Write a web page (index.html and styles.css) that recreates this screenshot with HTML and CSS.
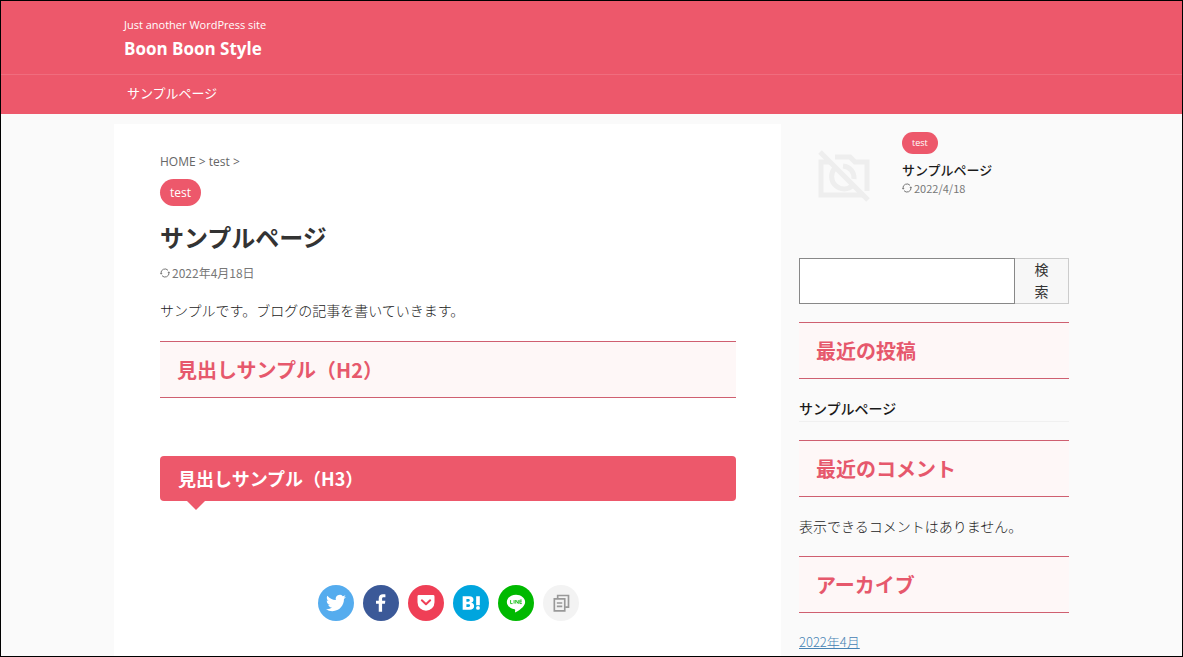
FILE: index.html
```html
<!doctype html>
<html lang="ja">
<head>
    <meta charset="UTF-8">
    <meta name="viewport" content="width=device-width, initial-scale=1">
    <title>サンプルページ</title>
    <link rel="stylesheet" href="styles.css">
</head>
<body>
    <header class="header">
      <div class="header-top">
        <div class="container">
          <p class="descr">Just another WordPress site</p>
          <p class="sitename"><a href="#">Boon Boon Style</a></p>
        </div>
      </div>
      <nav class="nav">
        <div class="container">
          <a href="#">サンプルページ</a>
        </div>
      </nav>
    </header>
    <div class="content">
      <main class="main">
        <div class="breadcrumb"><a href="#">HOME</a> &gt; <a href="#">test</a> &gt;</div>
        <a class="cat" href="#">test</a>
        <h1 class="entry-title">サンプルページ</h1>
        <p class="date">
          <svg class="refresh" viewBox="0 0 12 12"><path d="M1.2 6.500A4.800 4.800 0 0 1 9.600 2.800M10.800 5.500A4.800 4.800 0 0 1 2.400 9.200" fill="none" stroke="currentColor" stroke-width="1.200"/><path d="M0 6h3L1.300 8zM12 6H9l1.700-2z" fill="currentColor"/></svg>
          2022年4月18日
        </p>
        <p class="text">サンプルです。ブログの記事を書いていきます。</p>
        <h2 class="heading">見出しサンプル（H2）</h2>
        <h3 class="balloon">見出しサンプル（H3）</h3>
        <ul class="sns">
          <li><a class="twitter" href="#" aria-label="Twitter"><svg viewBox="0 0 24 24"><path fill="#fff" d="M23.95 4.57a10 10 0 0 1-2.82.77 4.96 4.96 0 0 0 2.16-2.72c-.95.55-2 .95-3.13 1.18a4.92 4.92 0 0 0-8.38 4.48C7.69 8.1 4.07 6.13 1.64 3.16a4.82 4.82 0 0 0-.67 2.48c0 1.71.87 3.21 2.19 4.1a4.9 4.9 0 0 1-2.23-.62v.06a4.92 4.92 0 0 0 3.95 4.83 5 5 0 0 1-2.21.08 4.94 4.94 0 0 0 4.6 3.42A9.87 9.87 0 0 1 0 19.54a14 14 0 0 0 7.55 2.21c9.05 0 14-7.5 14-13.98l-.02-.63a9.94 9.94 0 0 0 2.42-2.57z"/></svg></a></li>
          <li><a class="facebook" href="#" aria-label="Facebook"><svg viewBox="0 0 24 24"><path fill="#fff" d="M9.3 22.5V13H6V9.2h3.3V6.6c0-3.3 2-5.1 5-5.1 1.4 0 2.6.1 3 .2v3.4h-2c-1.7 0-2 .8-2 1.9v2.2h3.9l-.5 3.8h-3.4v9.500z"/></svg></a></li>
          <li><a class="pocket" href="#" aria-label="Pocket"><svg viewBox="0 0 24 24"><path fill="#fff" d="M3.5 2.5h17A1.7 1.7 0 0 1 22.2 4.2V11a10.2 10.2 0 0 1-20.4 0V4.2a1.7 1.7 0 0 1 1.7-1.7z"/><path d="M7 8.8l5 4.7 5-4.7" fill="none" stroke="#ef3f56" stroke-width="2.4" stroke-linecap="round" stroke-linejoin="round"/></svg></a></li>
          <li><a class="hatena" href="#" aria-label="はてなブックマーク"><svg viewBox="0 0 24 24"><path fill="#fff" fill-rule="evenodd" d="M2 4h8c3.400 0 5 1.500 5 4 0 1.900-1 3.200-2.900 3.600 2.300.3 3.600 1.800 3.600 4 0 3-2 4.400-5.400 4.400H2zm4.500 3.200v3.200H8.500c1.500 0 2-.5 2-1.600s-.7-1.600-2-1.600zm0 6.200v3.400h2.300c1.500 0 2.100-.5 2.100-1.700 0-1.200-.7-1.700-2.100-1.700zM18.200 4h4.400v10.600h-4.400z"/><circle cx="20.400" cy="17.900" r="2.300" fill="#fff"/></svg></a></li>
          <li><a class="line" href="#" aria-label="LINE"><svg viewBox="0 0 24 24"><path fill="#fff" d="M12 2C5.9 2 1 5.9 1 10.800c0 4.400 3.900 8 9.200 8.700 1 .3.9.9.6 3.300 0 .4.3.6.7.4 2.500-1.300 11.500-6.500 11.500-12.400C23 5.900 18.100 2 12 2z"/><path d="M5.500 8.500v4.200h2.400M9.700 8.500v4.200M11.700 12.700V8.500l3 4.200V8.500M19 8.500h-2.400v4.200H19M16.600 10.600H19" fill="none" stroke="#00b900"/></svg></a></li>
          <li><a class="copy" href="#" aria-label="コピー"><svg viewBox="0 0 24 24"><path d="M8 6V3h13v14h-4" fill="none" stroke="#999" stroke-width="2"/><path d="M4 7h12.500v14.500H4zM7 12h6.500M7 16h6.500" fill="none" stroke="#999" stroke-width="2"/></svg></a></li>
        </ul>
      </main>
      <aside class="side">
        <div class="recent">
          <a class="thumb" href="#" aria-label="サンプルページ"><svg viewBox="0 0 90 90"><g fill="none" stroke="#eee" stroke-width="5"><path d="M31 38H22v33h43M36 33h15l5 5h12v29"/><path d="M36 44a12 12 0 1 0 18 17M44 42a12 12 0 0 1 11 13"/><path d="M21 28l48 48"/></g></svg></a>
          <div>
            <a class="cat cat-small" href="#">test</a>
            <p class="recent-title"><a href="#">サンプルページ</a></p>
            <p class="date date-small">
              <svg class="refresh" viewBox="0 0 12 12"><path d="M1.2 6.500A4.800 4.800 0 0 1 9.600 2.800M10.800 5.500A4.800 4.800 0 0 1 2.400 9.200" fill="none" stroke="currentColor" stroke-width="1.200"/><path d="M0 6h3L1.300 8zM12 6H9l1.700-2z" fill="currentColor"/></svg>
              2022/4/18
            </p>
          </div>
        </div>
        <form class="search">
          <input type="text" aria-label="検索">
          <button type="submit">検索</button>
        </form>
        <h2 class="heading">最近の投稿</h2>
        <ul class="posts">
          <li><a href="#">サンプルページ</a></li>
        </ul>
        <h2 class="heading">最近のコメント</h2>
        <p class="no-comments">表示できるコメントはありません。</p>
        <h2 class="heading">アーカイブ</h2>
        <a class="archive" href="#">2022年4月</a>
      </aside>
    </div>
</body>
</html>
```

FILE: styles.css
```css
* {
  box-sizing: border-box;
  margin: 0;
  padding: 0;
}
body {
  display: flex;
  flex-direction: column;
  min-height: 100vh;
  border: 1px solid #000;
  background-color: #fafafa;
  color: #1a1a1a;
  font-family: "Open Sans", "Noto Sans CJK JP", sans-serif;
  font-size: 14px;
  line-height: 20px;
}
a {
  color: inherit;
  text-decoration: none;
}
ul {
  list-style: none;
}
.container,
.content {
  width: 100%;
  max-width: 955px;
  margin: 0 auto;
}

/* header */
.header {
  background-color: #ed586b;
  color: #fff;
}
.header-top {
  padding: 14px 0 11px;
  border-bottom: 1px solid #f06d7e;
}
.header-top .container {
  padding: 0 10px;
}
.descr {
  font-size: 11px;
}
.sitename {
  font-size: 17px;
  font-weight: bold;
  line-height: 28px;
}
.nav .container {
  padding: 0 13px 2px;
  font-size: 13px;
  line-height: 37px;
}

/* content */
.content {
  display: flex;
  flex: 1;
  gap: 18px;
  padding-top: 10px;
}
.main {
  flex: 1;
  padding: 28px 45px 0 46px;
  background-color: #fff;
}
.breadcrumb {
  color: #666;
  font-size: 12px;
}
.cat {
  display: inline-block;
  margin-top: 7px;
  padding: 0 10px;
  border-radius: 14px;
  background-color: #ed586b;
  color: #fff;
  font-size: 12px;
  line-height: 27px;
  vertical-align: top;
}
.entry-title {
  margin-top: 15px;
  color: #333;
  font-size: 24px;
  line-height: 34px;
}
.date {
  display: flex;
  align-items: center;
  gap: 2px;
  margin-top: 8px;
  color: #777;
  font-family: "Noto Sans CJK JP", sans-serif;
  font-size: 12px;
}
.refresh {
  width: 10px;
  height: 10px;
}
.text {
  margin: 18px 0 20px;
  font-weight: 300;
}
.heading {
  padding: 14px 17px;
  border-top: 1px solid #cf5f70;
  border-bottom: 1px solid #cf5f70;
  background-color: #fef7f7;
  color: #e6586c;
  font-family: "Noto Sans CJK JP", sans-serif;
  font-size: 20px;
  line-height: 27px;
}
.balloon {
  position: relative;
  margin-top: 58px;
  padding: 10px 18px;
  border-radius: 4px;
  background-color: #ed586b;
  color: #fff;
  font-family: "Noto Sans CJK JP", sans-serif;
  font-size: 18px;
  line-height: 25px;
}
.balloon::after {
  content: "";
  position: absolute;
  top: 100%;
  left: 27px;
  border: 9px solid transparent;
  border-top-color: #ed586b;
  border-bottom: 0;
}

/* share buttons */
.sns {
  display: flex;
  justify-content: center;
  gap: 9px;
  margin-top: 84px;
}
.sns a {
  display: flex;
  align-items: center;
  justify-content: center;
  width: 36px;
  height: 36px;
  border-radius: 50%;
}
.sns svg {
  width: 20px;
  height: 20px;
}
.twitter {
  background-color: #55acee;
}
.facebook {
  background-color: #3b5998;
}
.pocket {
  background-color: #ef3f56;
}
.hatena {
  background-color: #00a5de;
}
.line {
  background-color: #00b900;
}
.copy {
  background-color: #f3f3f3;
}

/* sidebar */
.side {
  width: 270px;
}
.recent {
  display: flex;
  gap: 13px;
  height: 134px;
}
.thumb svg {
  display: block;
  width: 90px;
  height: 90px;
}
.cat-small {
  margin-top: 8px;
  font-size: 9px;
  line-height: 22px;
}
.recent-title {
  margin-top: 6px;
  font-size: 13px;
  font-weight: 500;
}
.date-small {
  margin-top: 0;
  font-size: 11px;
  line-height: 16px;
}
.search {
  display: flex;
  height: 46px;
  margin-bottom: 18px;
}
.search input {
  flex: 1;
  min-width: 0;
  padding: 0 10px;
  border: 1px solid #888;
  background-color: #fff;
}
.search button {
  width: 54px;
  padding: 0 19px;
  border: 1px solid #ccc;
  border-left: 0;
  background-color: #f7f7f7;
  color: #333;
  font-family: inherit;
  font-size: 14px;
  line-height: 22px;
}
.posts {
  margin: 20px 0 18px;
}
.posts li {
  padding-bottom: 2px;
  border-bottom: 1px solid #f0f0f0;
  font-weight: 500;
}
.no-comments {
  margin: 20px 0 19px;
  font-weight: 300;
}
.archive {
  display: inline-block;
  margin-top: 19px;
  color: #4682b4;
  font-family: "Noto Sans CJK JP", sans-serif;
  font-size: 13px;
  font-weight: 300;
  text-decoration: underline;
}
```
